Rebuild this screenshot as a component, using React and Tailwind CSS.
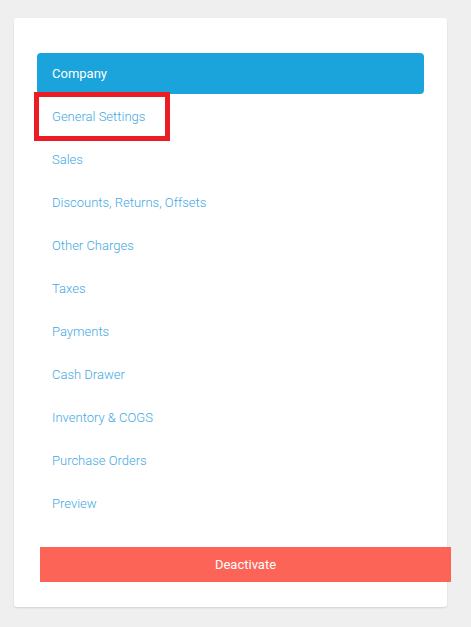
const items = [
  "General Settings",
  "Sales",
  "Discounts, Returns, Offsets",
  "Other Charges",
  "Taxes",
  "Payments",
  "Cash Drawer",
  "Inventory & COGS",
  "Purchase Orders",
  "Preview",
];

export default function App() {
  return (
    <div className="min-h-[627px] bg-[#efefef] pt-[18px] pl-[14px] font-['Roboto',sans-serif]">
      <div className="w-[433px] rounded-[3px] bg-white px-[23px] pt-[35px] pb-[25px] shadow-[0_1px_2px_rgba(0,0,0,0.12)]">
        <ul className="text-[13px]">
          <li className="mb-[1px] flex h-[41px] items-center rounded-[4px] bg-[#1ba3db] px-[15px] text-white">
            Company
          </li>
          {items.map((item, i) => (
            <li key={item} className="relative flex h-[43px] items-center px-[15px]">
              <a href="#" className="font-light text-[#3fa9e2]">
                {item}
              </a>
              {/* red highlight box around the selected entry */}
              {i === 0 && (
                <span className="absolute top-[-3px] left-[-3px] h-[49px] w-[136px] border-[5px] border-[#ec1c24]" />
              )}
            </li>
          ))}
        </ul>
        <button className="mt-[22px] ml-[3px] h-[35px] w-[411px] bg-[#fd6458] text-[13px] text-white">
          Deactivate
        </button>
      </div>
    </div>
  );
}
